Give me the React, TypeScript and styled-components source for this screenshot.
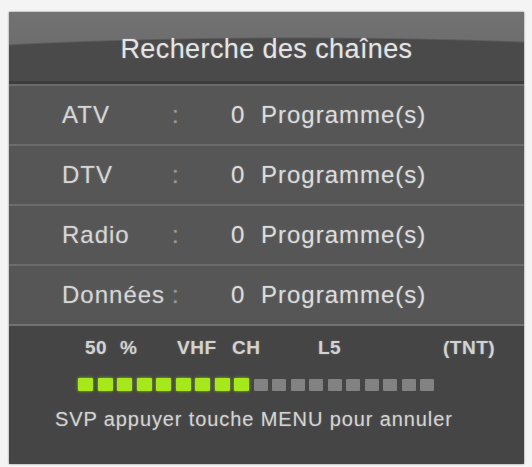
import React from 'react'
import styled, { createGlobalStyle } from 'styled-components'

const GlobalStyle = createGlobalStyle`
  html, body {
    margin: 0;
    padding: 0;
    background: #f4f4f4;
  }
  body {
    font-family: 'Liberation Sans', Arial, sans-serif;
  }
`

const Screen = styled.div`
  width: 532px;
  height: 467px;
  padding: 12px 8px 0 9px;
  box-sizing: border-box;
`

const Panel = styled.div`
  width: 515px;
  height: 452px;
  display: flex;
  flex-direction: column;
  background: #565656;
  box-shadow: 0 0 2px rgba(0, 0, 0, 0.45);
  color: #dedede;
  text-shadow: 0 0 2px rgba(255, 255, 255, 0.25);
`

const Header = styled.div`
  height: 69px;
  display: flex;
  align-items: center;
  justify-content: center;
  background:
    radial-gradient(ellipse 540px 44px at 56% 100%, #4a4a4a 96%, transparent 100%),
    linear-gradient(#727272, #686868);
  border-bottom: 3px solid #3c3c3c;
`

const Title = styled.h1`
  margin: 0;
  padding-top: 6px;
  font-size: 27px;
  font-weight: normal;
  letter-spacing: 0.4px;
  color: #e4e4e4;
`

const Row = styled.div`
  height: 58px;
  display: flex;
  align-items: center;
  padding-left: 53px;
  border-top: 2px solid #6b6b6b;
  font-size: 24px;
  letter-spacing: 1px;

  &:first-of-type {
    border-top-color: #5a5a5a;
  }
`

const Label = styled.span`
  width: 110px;
  color: #d6d6d6;
  white-space: nowrap;
`

const Colon = styled.span`
  width: 59px;
  color: #9a9a9a;
`

const Count = styled.span`
  width: 30px;
  color: #dcdcdc;
`

const Unit = styled.span`
  color: #dcdcdc;
`

const Footer = styled.div`
  flex: 1;
  display: flex;
  flex-direction: column;
  background: #454545;
  border-top: 2px solid #727272;
  padding-top: 11px;
`

const Status = styled.div`
  display: flex;
  padding-left: 76px;
  font-size: 19px;
  font-weight: bold;
  line-height: 22px;
  color: #d2d2d2;
`

const StatusCell = styled.span<{ $w?: number }>`
  width: ${({ $w }) => ($w ? `${$w}px` : 'auto')};
  white-space: nowrap;
  word-spacing: 7px;
  letter-spacing: 0.5px;
`

const Bar = styled.div`
  display: flex;
  gap: 4.5px;
  margin-top: 19px;
  padding-left: 69px;
  height: 13px;
  align-items: center;
`

const Cell = styled.span<{ $on: boolean }>`
  width: ${({ $on }) => ($on ? '15px' : '14px')};
  height: ${({ $on }) => ($on ? '13px' : '12px')};
  border-radius: 1px;
  background: ${({ $on }) => ($on ? '#a6e81c' : '#828282')};
  box-shadow: ${({ $on }) => ($on ? '0 0 3px rgba(166, 232, 28, 0.8)' : 'none')};
`

const Hint = styled.div`
  margin-top: 16px;
  padding-left: 46px;
  font-size: 20px;
  line-height: 24px;
  letter-spacing: 0.9px;
  color: #d4d4d4;
  white-space: nowrap;
`

const rows = [
  { label: 'ATV', count: 0 },
  { label: 'DTV', count: 0 },
  { label: 'Radio', count: 0 },
  { label: 'Données', count: 0 },
]

const progress = 9
const total = 19

export default function App() {
  return (
    <>
      <GlobalStyle />
      <Screen>
        <Panel>
          <Header>
            <Title>Recherche des chaînes</Title>
          </Header>

          {rows.map(r => (
            <Row key={r.label}>
              <Label>{r.label}</Label>
              <Colon>:</Colon>
              <Count>{r.count}</Count>
              <Unit>Programme(s)</Unit>
            </Row>
          ))}

          <Footer>
            <Status>
              <StatusCell $w={92}>50 %</StatusCell>
              <StatusCell $w={55}>VHF</StatusCell>
              <StatusCell $w={86}>CH</StatusCell>
              <StatusCell $w={125}>L5</StatusCell>
              <StatusCell>(TNT)</StatusCell>
            </Status>
            <Bar>
              {Array.from({ length: total }, (_, i) => (
                <Cell key={i} $on={i < progress} />
              ))}
            </Bar>
            <Hint>SVP appuyer touche MENU pour annuler</Hint>
          </Footer>
        </Panel>
      </Screen>
    </>
  )
}
